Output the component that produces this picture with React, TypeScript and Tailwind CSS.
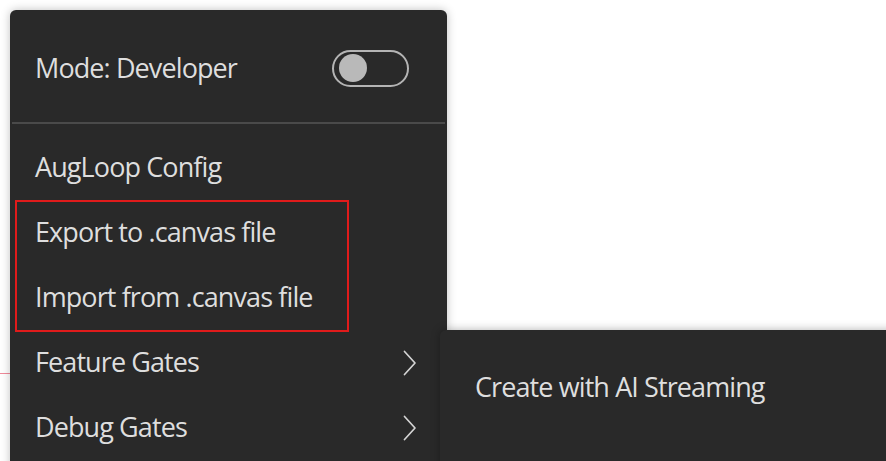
const items = [
  { label: "AugLoop Config", sub: false },
  { label: "Export to .canvas file", sub: false },
  { label: "Import from .canvas file", sub: false },
  { label: "Feature Gates", sub: true },
  { label: "Debug Gates", sub: true },
];

function Chevron() {
  return (
    <svg width="14" height="26" viewBox="0 0 14 26" fill="none" className="shrink-0">
      <path d="M1.5 1.5 L12 13 L1.5 24.5" stroke="#d4d4d4" strokeWidth="1.7" strokeLinecap="round" strokeLinejoin="round" />
    </svg>
  );
}

export default function App() {
  return (
    <div
      className="relative w-[886px] h-[461px] overflow-hidden bg-white text-[27px] text-[#dedede]"
      style={{ fontFamily: '"Open Sans", "Noto Sans", sans-serif' }}
    >
      {/* faint line from the canvas behind */}
      <div className="absolute left-0 top-[373px] w-[20px] h-[1px] bg-[#f08a9a]" />

      <div className="ml-[10px] mt-[10px] w-[437px] h-[520px] rounded-[6px] bg-[#292929] shadow-[0_0_10px_rgba(0,0,0,0.25)] pt-[12px] relative">
        <div className="h-[92px] flex items-center justify-between pl-[25px] pr-[38px]">
          <span className="tracking-[-0.9px]">Mode: Developer</span>
          <div className="w-[77px] h-[37px] rounded-full border-2 border-[#b4b4b4] flex items-center pl-[5px]">
            <div className="w-[28px] h-[28px] rounded-full bg-[#b9b9b9]" />
          </div>
        </div>
        <div className="mx-[2px] mt-[8px] h-[2px] bg-[#4a4a4a]" />
        <div className="mt-[11px]">
          {items.map((it) => (
            <div key={it.label} className="h-[65px] flex items-center justify-between pl-[25px] pr-[30px]">
              <span className="tracking-[-0.9px]">{it.label}</span>
              {it.sub && <Chevron />}
            </div>
          ))}
        </div>

        {/* annotation box */}
        <div className="absolute left-[5px] top-[190px] w-[334px] h-[132px] border-2 border-[#e01b1b]" />
      </div>

      {/* flyout submenu */}
      <div className="absolute left-[440px] top-[330px] w-[470px] h-[200px] rounded-[6px] bg-[#292929] shadow-[0_0_10px_rgba(0,0,0,0.3)] pt-[25px]">
        <div className="h-[64px] flex items-center pl-[35px]">
          <span className="tracking-[-0.9px]">Create with AI Streaming</span>
        </div>
      </div>
    </div>
  );
}
